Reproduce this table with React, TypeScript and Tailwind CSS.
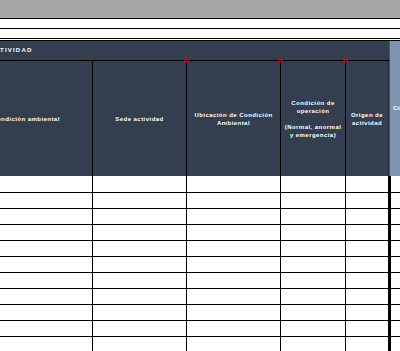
import React from 'react';

const font = { fontFamily: '"Liberation Sans", Arial, sans-serif' };

const columns = [
  { w: 'w-[133px]', label: ['Condición ambiental'], note: false },
  { w: 'w-[94px]', label: ['Sede actividad'], note: true },
  { w: 'w-[94px]', label: ['Ubicación de Condición', 'Ambiental'], note: true },
  { w: 'w-[65px]', label: ['Condición de', 'operación', '', '(Normal, anormal', 'y emergencia)'], note: true },
];

const rows = Array.from({ length: 11 }, (_, i) => i);

const HeaderCell = ({ w, border, label, note }: { w: string; border: string; label: string[]; note: boolean }) => (
  <div className={`relative flex h-full ${w} shrink-0 items-center justify-center ${border} px-1 text-center`}>
    <div className="text-[6px] font-bold leading-[8px] tracking-[0.45px] text-white">
      {label.map((line, i) => (
        <div key={i} className="h-[8px] whitespace-nowrap">
          {line}
        </div>
      ))}
    </div>
    {note && <span className="absolute -right-[3px] -top-[3px] h-[5px] w-[5px] rounded-full bg-red-600/60 blur-[0.6px]" />}
  </div>
);

const App = () => {
  return (
    <div className="h-[351px] w-[400px] overflow-hidden bg-white" style={font}>
      <div className="h-[18px] bg-[#a6a6a6]" />
      <div className="h-[11px] border-y border-black bg-white" />
      <div className="h-[10px] border-b border-black bg-white" />
      <div className="h-[2px] border-b border-black bg-white" />

      <div className="ml-[-40px] w-[520px]">
        {/* header */}
        <div className="flex h-[135px]">
          <div className="flex w-[429px] shrink-0 flex-col bg-[#333f4f]">
            <div className="flex h-[20px] items-center border-b border-black pl-[29px]">
              <span className="text-[6px] font-bold uppercase tracking-[1.2px] text-white">Actividad</span>
            </div>
            <div className="flex h-[115px]">
              {columns.map((c, i) => (
                <HeaderCell key={i} w={c.w} border="border-r border-black" label={c.label} note={c.note} />
              ))}
              <HeaderCell w="w-[43px]" border="border-r border-[#222a36]" label={['Origen de', 'actividad']} note={false} />
            </div>
          </div>
          <div className="flex w-[60px] shrink-0 items-center border-l border-[#4a5568] bg-[#7f93b1] pl-[3px]">
            <span className="text-[6px] font-bold text-white">Código</span>
          </div>
        </div>

        {/* body rows */}
        {rows.map((r) => (
          <div key={r} className={`flex ${r === 0 ? 'h-[17px]' : 'h-[16px]'} border-b border-black`}>
            {columns.map((c, i) => (
              <div key={i} className={`h-full ${c.w} shrink-0 border-r border-black`} />
            ))}
            <div className="h-full w-[45px] shrink-0 border-r-[3px] border-black" />
            <div className="h-full w-[60px] shrink-0" />
          </div>
        ))}
      </div>
    </div>
  );
};

export default App;
